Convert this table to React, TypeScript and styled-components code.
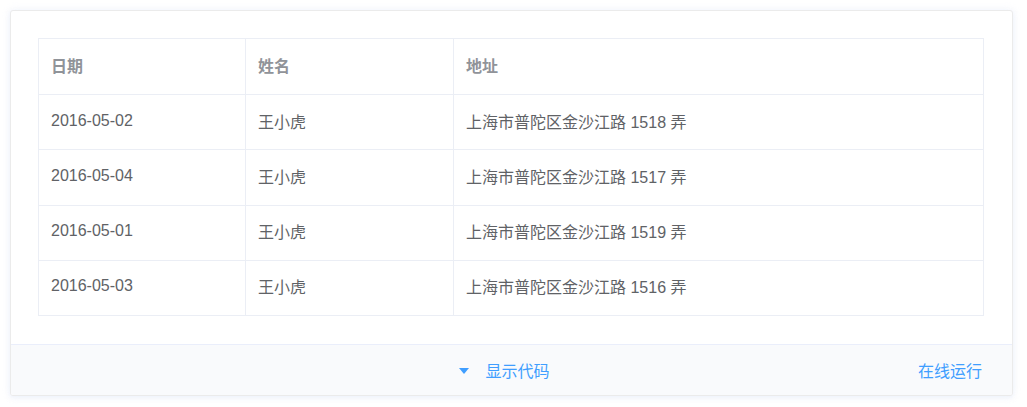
import React from "react";
import styled, { createGlobalStyle } from "styled-components";

const GlobalStyle = createGlobalStyle`
  html, body {
    margin: 0;
    padding: 0;
    background: #ffffff;
  }
  body {
    font-family: "Liberation Sans", "Noto Sans CJK SC", sans-serif;
    -webkit-font-smoothing: antialiased;
  }
`;

const Page = styled.div`
  padding: 10px 15px 10px 10px;
`;

const DemoBlock = styled.div`
  width: 1003px;
  box-sizing: border-box;
  border: 1px solid #ebebeb;
  border-radius: 3px;
  box-shadow: 0 0 8px 0 rgba(232, 237, 250, 0.6), 0 2px 4px 0 rgba(232, 237, 250, 0.5);
  background: #fff;
  overflow: hidden;
`;

const Source = styled.div`
  padding: 27px 28px 28px 27px;
`;

const Table = styled.div`
  border-top: 1px solid #ebeef5;
  border-left: 1px solid #ebeef5;
  display: grid;
  grid-template-columns: 207px 208px 1fr;
`;

const Cell = styled.div<{ $head?: boolean }>`
  box-sizing: border-box;
  height: ${(p) => (p.$head ? "56px" : "55.25px")};
  display: flex;
  align-items: center;
  padding: 0 12px 3px;
  border-right: 1px solid #ebeef5;
  border-bottom: 1px solid #ebeef5;
  font-size: 16px;
  color: ${(p) => (p.$head ? "#909399" : "#606266")};
  font-weight: ${(p) => (p.$head ? 700 : 400)};
  white-space: nowrap;
`;

const Control = styled.div`
  height: 50px;
  border-top: 1px solid #eaeefb;
  background: #f9fafc;
  display: grid;
  grid-template-columns: 1fr auto 1fr;
  align-items: center;
  padding: 0 30px 0 0;
`;

const Toggle = styled.div`
  grid-column: 2;
  display: flex;
  align-items: center;
  gap: 16px;
  color: #409eff;
  font-size: 16px;
  margin-left: 16px;
  cursor: pointer;
`;

const Caret = styled.span`
  width: 0;
  height: 0;
  border-left: 5px solid transparent;
  border-right: 5px solid transparent;
  border-top: 6px solid #409eff;
  margin-top: 1px;
`;

const RunButton = styled.span`
  grid-column: 3;
  justify-self: end;
  color: #409eff;
  font-size: 16px;
  cursor: pointer;
`;

const rows = [
  { date: "2016-05-02", name: "王小虎", address: "上海市普陀区金沙江路 1518 弄" },
  { date: "2016-05-04", name: "王小虎", address: "上海市普陀区金沙江路 1517 弄" },
  { date: "2016-05-01", name: "王小虎", address: "上海市普陀区金沙江路 1519 弄" },
  { date: "2016-05-03", name: "王小虎", address: "上海市普陀区金沙江路 1516 弄" },
];

export default function App() {
  return (
    <>
      <GlobalStyle />
      <Page>
        <DemoBlock>
          <Source>
            <Table>
              <Cell $head>日期</Cell>
              <Cell $head>姓名</Cell>
              <Cell $head>地址</Cell>
              {rows.map((r, i) => (
                <React.Fragment key={i}>
                  <Cell>{r.date}</Cell>
                  <Cell>{r.name}</Cell>
                  <Cell>{r.address}</Cell>
                </React.Fragment>
              ))}
            </Table>
          </Source>
          <Control>
            <Toggle>
              <Caret />
              <span>显示代码</span>
            </Toggle>
            <RunButton>在线运行</RunButton>
          </Control>
        </DemoBlock>
      </Page>
    </>
  );
}
